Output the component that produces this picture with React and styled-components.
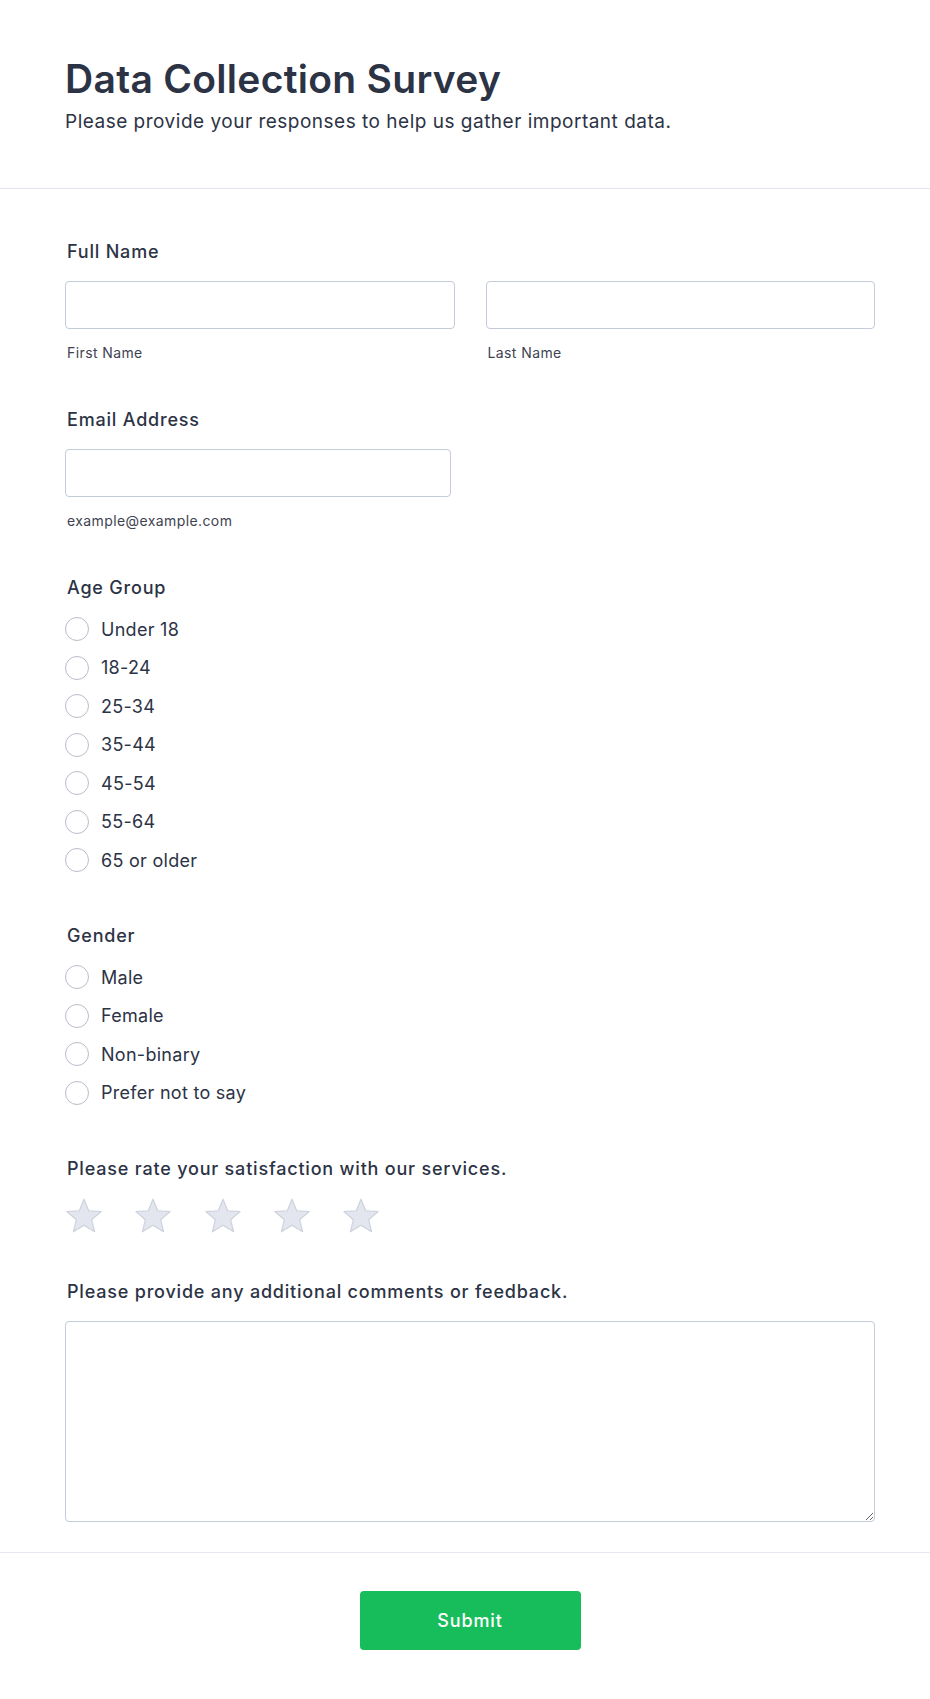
import styled, { createGlobalStyle } from "styled-components";

const GlobalStyle = createGlobalStyle`
  html, body {
    margin: 0;
    padding: 0;
    background: #fff;
  }
  body {
    font-family: Inter, "Noto Sans", sans-serif;
    color: #2c3345;
  }
  * {
    box-sizing: border-box;
  }
`;

const ageGroups = ["Under 18", "18-24", "25-34", "35-44", "45-54", "55-64", "65 or older"];
const genders = ["Male", "Female", "Non-binary", "Prefer not to say"];

const Star = () => (
  <svg width="38" height="36" viewBox="0 0 38 36">
    <polygon
      points="19,1.2 23.7,12.73 36.12,13.64 26.61,21.67 29.58,33.76 19,27.2 8.42,33.76 11.39,21.67 1.88,13.64 14.3,12.73"
      fill="#e3e6ef"
      stroke="#cdd2dd"
      strokeWidth="1.2"
      strokeLinejoin="round"
    />
  </svg>
);

const RadioGroup = ({ options }) => (
  <RadioList>
    {options.map((opt) => (
      <RadioRow key={opt}>
        <RadioCircle />
        <RadioText>{opt}</RadioText>
      </RadioRow>
    ))}
  </RadioList>
);

const App = () => {
  return (
    <Page>
      <GlobalStyle />
      <Header>
        <Title>Data Collection Survey</Title>
        <Subtitle>Please provide your responses to help us gather important data.</Subtitle>
      </Header>

      <FormBody>
        <Field>
          <Label>Full Name</Label>
          <TwoCol>
            <div>
              <TextInput />
              <SubLabel>First Name</SubLabel>
            </div>
            <div>
              <TextInput />
              <SubLabel>Last Name</SubLabel>
            </div>
          </TwoCol>
        </Field>

        <Field>
          <Label>Email Address</Label>
          <TextInput $narrow />
          <SubLabel>example@example.com</SubLabel>
        </Field>

        <Field $radio>
          <Label>Age Group</Label>
          <RadioGroup options={ageGroups} />
        </Field>

        <Field $radio>
          <Label>Gender</Label>
          <RadioGroup options={genders} />
        </Field>

        <Field $stars>
          <Label>Please rate your satisfaction with our services.</Label>
          <StarRow>
            {[1, 2, 3, 4, 5].map((n) => (
              <Star key={n} />
            ))}
          </StarRow>
        </Field>

        <Field $last>
          <Label>Please provide any additional comments or feedback.</Label>
          <TextArea />
        </Field>
      </FormBody>

      <Footer>
        <SubmitButton>Submit</SubmitButton>
      </Footer>
    </Page>
  );
};

// page
const Page = styled.div`
  width: 930px;
  min-height: 1699px;
  background: #fff;
`;

// header
const Header = styled.div`
  padding: 56px 55px 53px 65px;
  border-bottom: 1px solid #e3e5ec;
`;

const Title = styled.h1`
  margin: 0;
  font-size: 39px;
  line-height: 46px;
  font-weight: 600;
  color: #2c3345;
  letter-spacing: 0.3px;
`;

const Subtitle = styled.p`
  margin: 6px 0 0;
  font-size: 19px;
  line-height: 27px;
  color: #2c3345;
  letter-spacing: 0.5px;
`;

// form
const FormBody = styled.div`
  padding: 49px 55px 30px 65px;
  border-bottom: 1px solid #e6e8f0;
`;

const Field = styled.div`
  margin-bottom: ${(p) => (p.$last ? "0" : p.$radio ? "50px" : p.$stars ? "44px" : "43px")};
`;

const Label = styled.div`
  font-size: 18px;
  line-height: 27px;
  font-weight: 500;
  color: #2c3345;
  letter-spacing: 0.8px;
  padding-left: 2px;
  margin-bottom: 16px;
`;

const TwoCol = styled.div`
  display: grid;
  grid-template-columns: 1fr 1fr;
  column-gap: 31px;
`;

const TextInput = styled.input`
  display: block;
  width: ${(p) => (p.$narrow ? "386px" : "100%")};
  height: 48px;
  border: 1px solid #c3cad8;
  border-radius: 4px;
  background: #fff;
  outline: none;
  font-family: inherit;
  font-size: 16px;
  padding: 0 12px;
`;

const SubLabel = styled.div`
  margin-top: 13px;
  font-size: 14px;
  line-height: 21px;
  color: #3e4352;
  letter-spacing: 0.4px;
  padding-left: 2px;
`;

const RadioList = styled.div`
  display: flex;
  flex-direction: column;
  gap: 14.5px;
  margin-top: 1.5px;
`;

const RadioRow = styled.label`
  display: flex;
  align-items: center;
  height: 24px;
  gap: 12px;
`;

const RadioCircle = styled.span`
  width: 24px;
  height: 24px;
  border-radius: 50%;
  border: 1px solid #b8bdc9;
  background: #fff;
  flex-shrink: 0;
`;

const RadioText = styled.span`
  font-size: 18px;
  color: #2c3345;
  letter-spacing: 0.28px;
`;

const StarRow = styled.div`
  display: flex;
  gap: 31.3px;
  margin-top: 2px;
`;

const TextArea = styled.textarea`
  display: block;
  width: 100%;
  height: 201px;
  border: 1px solid #c3cad8;
  border-radius: 4px;
  resize: vertical;
  outline: none;
  font-family: inherit;
  font-size: 16px;
  padding: 10px 12px;
`;

// footer
const Footer = styled.div`
  display: flex;
  justify-content: center;
  padding: 38px 55px 50px 65px;
`;

const SubmitButton = styled.button`
  width: 221px;
  height: 59px;
  border: none;
  border-radius: 4px;
  background: #18bd5b;
  color: #fff;
  font-family: inherit;
  font-size: 18px;
  font-weight: 500;
  letter-spacing: 0.9px;
  cursor: pointer;
`;

export default App;
